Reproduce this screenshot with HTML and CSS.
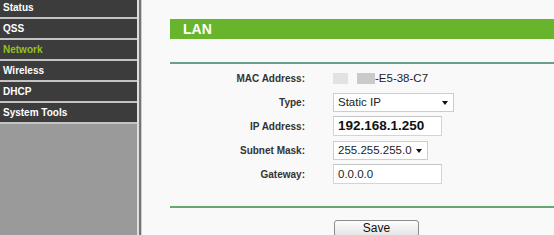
FILE: index.html
```html
<!DOCTYPE html>
<html lang="en">
<head>
    <meta charset="UTF-8">
    <meta name="viewport" content="width=device-width, initial-scale=1.0">
    <title>LAN</title>
    <link rel="stylesheet" href="styles.css">
</head>
<body>
    <div class="page">
        <!-- Left menu -->
        <nav class="menu">
            <ul>
                <li><a href="#">Status</a></li>
                <li><a href="#">QSS</a></li>
                <li class="active"><a href="#">Network</a></li>
                <li><a href="#">Wireless</a></li>
                <li><a href="#">DHCP</a></li>
                <li><a href="#">System Tools</a></li>
            </ul>
        </nav>
        <div class="divider"></div>

        <!-- Main panel -->
        <main class="content">
            <div class="title-bar">LAN</div>
            <div class="rule"></div>

            <div class="form">
                <label>MAC Address:</label>
                <div class="value mac"><span class="blur one"></span><span class="blur two"></span>-E5-38-C7</div>

                <label>Type:</label>
                <div class="value"><div class="select type">Static IP<span class="caret"></span></div></div>

                <label>IP Address:</label>
                <div class="value"><div class="input ip">192.168.1.250</div></div>

                <label>Subnet Mask:</label>
                <div class="value"><div class="select mask">255.255.255.0<span class="caret"></span></div></div>

                <label>Gateway:</label>
                <div class="value"><div class="input">0.0.0.0</div></div>
            </div>

            <div class="rule bottom"></div>

            <div class="actions">
                <button id="save">Save</button>
            </div>
        </main>
    </div>
</body>
</html>
```

FILE: styles.css
```css
/* GLOBAL */
body {
    margin: 0;
    font-family: "Liberation Sans", Arial, sans-serif;
    background-color: #f9f9f9;
    overflow: hidden;
}

.page {
    display: flex;
    height: 235px;
}

/* MENU */
.menu {
    width: 137px;
    flex-shrink: 0;
    background-color: #9a9a9a;
}

.menu ul {
    list-style: none;
    margin: -2px 0 0 0;
    padding: 0;
}

.menu li {
    height: 19px;
    line-height: 19px;
    background-color: #3c3c3c;
    border-bottom: 2px solid #c4c4c4;
}

.menu a {
    display: block;
    padding-left: 3px;
    font-size: 10px;
    font-weight: bold;
    color: #fff;
    text-decoration: none;
}

.menu li.active a {
    color: #93c21f;
}

.divider {
    width: 2px;
    flex-shrink: 0;
    background-color: #747474;
    border-left: 2px solid #dedede;
    border-right: 1px solid #cfcfcf;
}

/* CONTENT */
.content {
    flex: 1;
    padding-left: 28px;
}

.title-bar {
    margin-top: 19px;
    height: 20px;
    line-height: 20px;
    padding-left: 13px;
    background-color: #68b52d;
    color: #fff;
    font-size: 14px;
    font-weight: bold;
}

.rule {
    margin-top: 23px;
    height: 2px;
    background-color: #6a9e8d;
}

.rule.bottom {
    margin-top: 20px;
    background-color: #65a874;
}

.form {
    display: grid;
    grid-template-columns: 135px 1fr;
    grid-auto-rows: 24px;
    column-gap: 28px;
    align-items: center;
    margin-top: 2px;
}

.form label {
    text-align: right;
    font-size: 10px;
    font-weight: bold;
    color: #333;
}

.value {
    font-size: 11.5px;
    color: #222;
}

.mac {
    display: flex;
    align-items: center;
}

.blur {
    display: inline-block;
    height: 11px;
    filter: blur(0.6px);
}

.blur.one {
    width: 15px;
    background-color: #e2e2e2;
}

.blur.two {
    width: 18px;
    margin-left: 9px;
    background-color: #cacaca;
}

.select, .input {
    box-sizing: border-box;
    position: relative;
    background-color: #fff;
    padding-left: 4px;
}

.select {
    height: 19px;
    line-height: 17px;
    border: 1px solid #cdcdcd;
}

.select.type {
    width: 121px;
}

.select.mask {
    width: 95px;
}

.caret {
    position: absolute;
    right: 5px;
    top: 7px;
    border-left: 3px solid transparent;
    border-right: 3px solid transparent;
    border-top: 4px solid #111;
}

.input {
    width: 109px;
    height: 20px;
    line-height: 18px;
    border: 1px solid #d4d4d4;
    border-top-color: #c4c4c4;
}

.input.ip {
    font-size: 13.5px;
    font-weight: bold;
    color: #111;
}

/* BUTTON */
.actions {
    padding-left: 164px;
    margin-top: 10px;
}

button {
    width: 85px;
    height: 17px;
    padding: 0;
    font-family: "Liberation Sans", Arial, sans-serif;
    font-size: 12px;
    color: #111;
    border: 1px solid #8c8c8c;
    border-radius: 3px;
    background: linear-gradient(#fdfdfd, #e4e4e4);
    cursor: pointer;
}
```
